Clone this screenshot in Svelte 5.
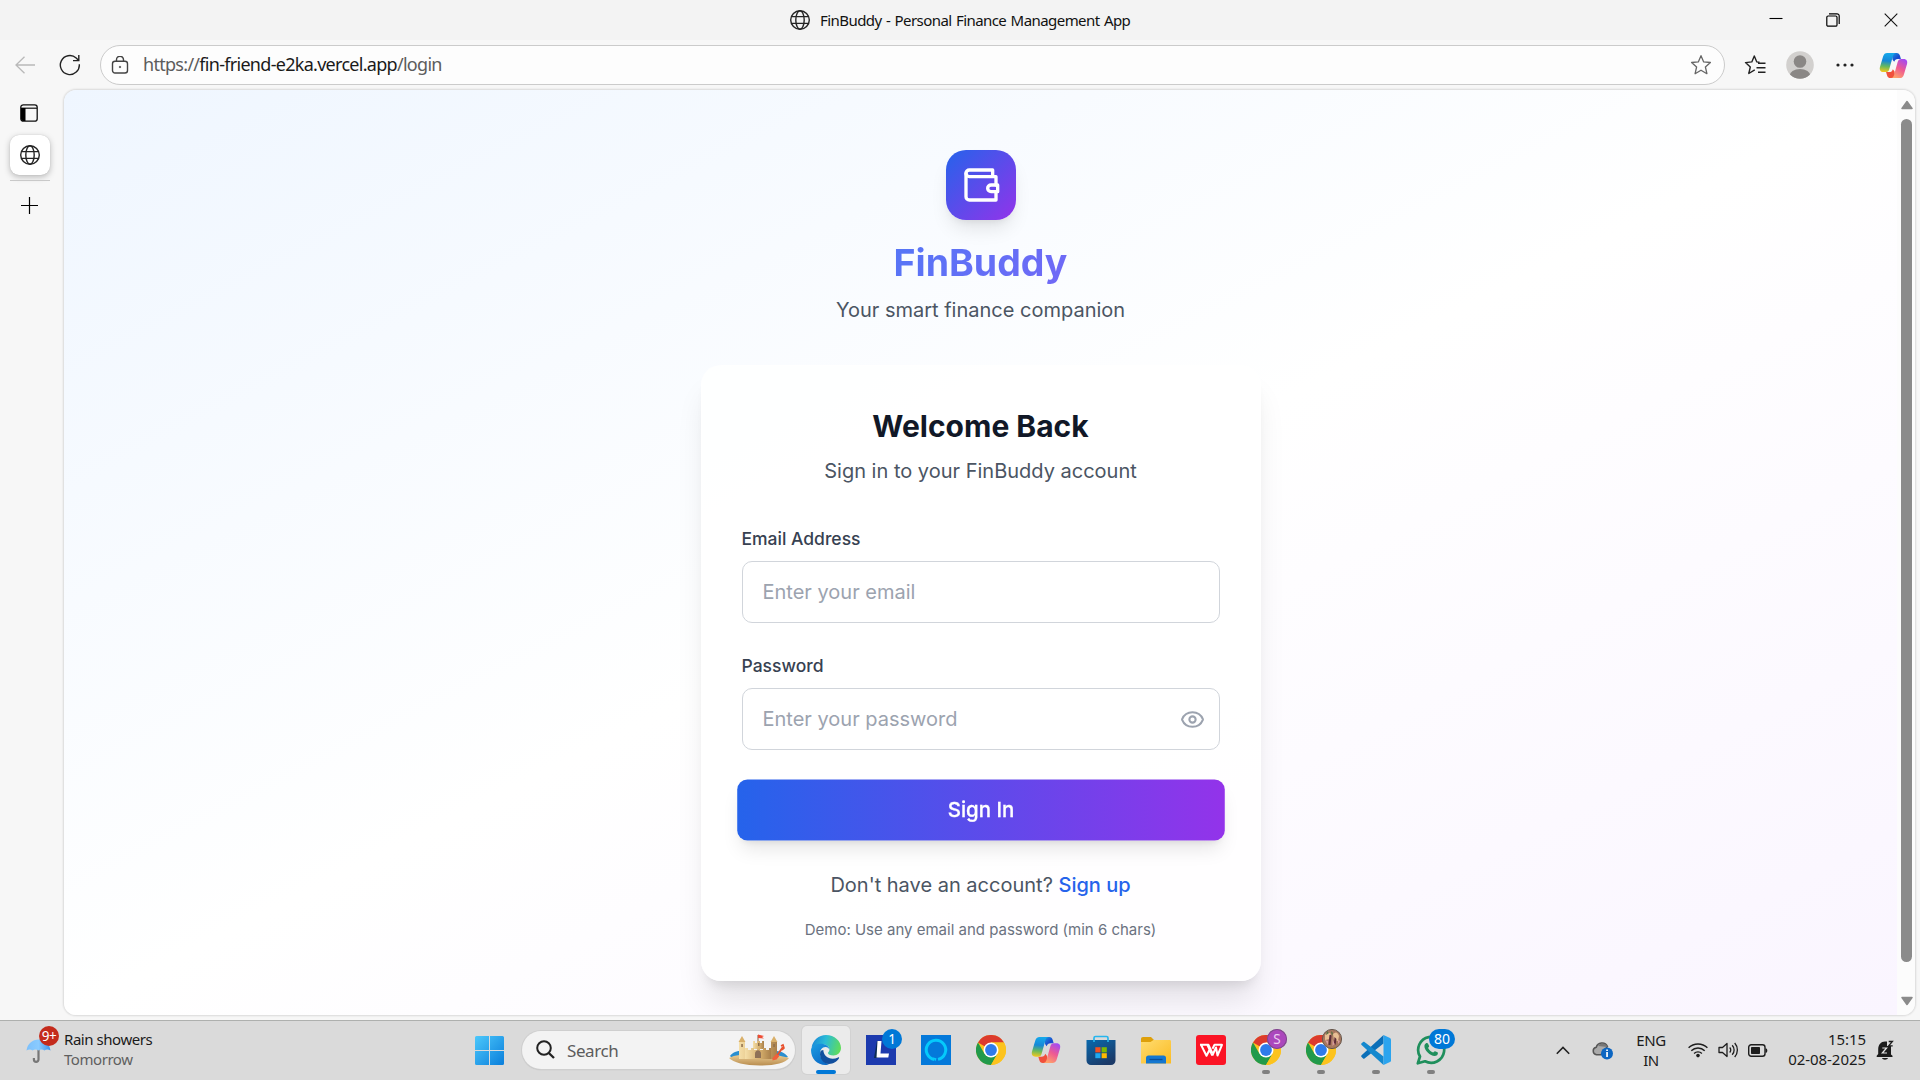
<script>
  let email = $state('');
  let password = $state('');
</script>

{#snippet globe()}
  <svg width="22" height="22" viewBox="0 0 22 22" fill="none" stroke="#242424" stroke-width="1.4">
    <circle cx="11" cy="11" r="9.3" />
    <ellipse cx="11" cy="11" rx="4.2" ry="9.3" />
    <path d="M2.3 7.6h17.4M2.3 14.4h17.4" />
  </svg>
{/snippet}

{#snippet copilot(id, size)}
  <svg width={size} height={size} viewBox="0 0 30 30">
    <defs>
      <linearGradient id="{id}a" x1="0.3" y1="0" x2="0.2" y2="1">
        <stop offset="0" stop-color="#16a8ea" /><stop offset=".4" stop-color="#1588d8" />
        <stop offset=".7" stop-color="#68b95c" /><stop offset="1" stop-color="#f8c81c" />
      </linearGradient>
      <linearGradient id="{id}b" x1="0.8" y1="0" x2="0.3" y2="1">
        <stop offset="0" stop-color="#a24af5" /><stop offset=".5" stop-color="#ee5a92" />
        <stop offset="1" stop-color="#ffa36a" />
      </linearGradient>
      <linearGradient id="{id}c" x1="0" y1="0" x2="1" y2="1">
        <stop offset="0" stop-color="#1b9ee8" /><stop offset=".6" stop-color="#1848cc" />
        <stop offset="1" stop-color="#2462e0" />
      </linearGradient>
    </defs>
    <path d="M13 2h5.2c2 0 3 1.2 3.5 3l1 3.2h-3.2c-2.2 0-3.2 1-3.8 3L14 9z" fill="url(#{id}c)" />
    <path d="M17 28h-5.200c-2 0-3-1.200-3.500-3l-1-3.200h3.200c2.200 0 3.200-1 3.800-3L16 21z" fill="#f0503c" />
    <path d="M8.500 2h9c-1.700.3-2.500 1.500-3 3l-3.800 13.500c-.6 2.200-1.700 3.200-3.700 3.200H4.500C1.500 21.700.2 19.500 1 16.500L4.300 5.500C5 3.200 6.300 2 8.500 2z" fill="url(#{id}a)" />
    <path d="M21.500 28h-9c1.700-.3 2.500-1.500 3-3l3.800-13.500c.6-2.200 1.700-3.200 3.700-3.200h2.500c3 0 4.300 2.200 3.500 5.200l-3.300 11c-.7 2.300-2 3.500-4.200 3.500z" fill="url(#{id}b)" />
  </svg>
{/snippet}

{#snippet chrome()}
  <svg width="30" height="30" viewBox="0 0 30 30">
    <circle cx="15" cy="15" r="15" fill="#fcc31e" />
    <path d="M15 15 2 7.500A15 15 0 0 1 28 7.500H15z" fill="#dc3b2d" />
    <path d="M2 7.500A15 15 0 0 0 15 30l6.500-11.200L15 15 8.500 18.800z" fill="#219a4b" />
    <path d="M15 30 21.500 18.800 22.500 15 28 7.500A15 15 0 0 1 15 30z" fill="#fcc31e" />
    <path d="M15 7.500h13L15 15z" fill="#fcc31e" />
    <circle cx="15" cy="15" r="7.500" fill="#fff" />
    <circle cx="15" cy="15" r="5.900" fill="#2f7bea" />
  </svg>
{/snippet}

<div class="desktop">
  <header class="titlebar">
    <div class="page-title">{@render globe()}<span>FinBuddy - Personal Finance Management App</span></div>
    <div class="window-controls">
      <svg width="14" height="14" viewBox="0 0 14 14"><path d="M.5 5.500h13" stroke="#000" stroke-width="1.100" /></svg>
      <svg width="14" height="14" viewBox="0 0 14 14" fill="none" stroke="#000" stroke-width="1.200"><rect x=".8" y="3" width="10.200" height="10.200" rx="1.300" /><path d="M3 .8h8a2.200 2.200 0 0 1 2.200 2.200v8" /></svg>
      <svg width="14" height="14" viewBox="0 0 14 14"><path d="m.7.7 12.600 12.600m0-12.600L.7 13.300" stroke="#111" stroke-width="1.100" /></svg>
    </div>
  </header>

  <nav class="toolbar">
    <div class="cell">
      <svg width="20" height="18" viewBox="0 0 20 18" fill="none" stroke="#b9b9b9" stroke-width="1.300"><path d="M20 9H1M9.500.7 1 9l8.500 8.300" /></svg>
    </div>
    <div class="cell">
      <svg width="22" height="22" viewBox="0 0 22 22" fill="none" stroke="#222" stroke-width="1.400"><path d="M20.300 10.200A9.500 9.500 0 1 1 17.200 4l2.500 2.500M19.800 1v5.600h-5.800" /></svg>
    </div>
    <div class="address">
      <svg width="18" height="18" viewBox="0 0 18 18" fill="none" stroke="#444" stroke-width="1.400"><rect x="1.500" y="5.200" width="15" height="11.800" rx="2.500" /><path d="M5.500 5V3.700a3.500 3.500 0 0 1 7 0V5" /><circle cx="9" cy="11" r=".8" fill="#333" stroke-width=".6" /></svg>
      <span class="url">https://<b>fin-friend-e2ka.vercel.app</b>/login</span>
      <svg width="22" height="22" viewBox="0 0 22 22" fill="none" stroke="#666" stroke-width="1.300" stroke-linejoin="round"><path d="m11 1.700 2.700 6.200 6.700.6-5 4.500 1.500 6.700L11 16.200l-5.900 3.500L6.600 13l-5-4.500 6.700-.6z" /></svg>
    </div>
    <div class="cell">
      <svg width="22" height="22" viewBox="0 0 22 22" fill="none" stroke="#222" stroke-width="1.400" stroke-linejoin="round"><path d="m15.500 8.200-2.700-.3L10.300 2 7.800 7.900l-6.300.7 4.800 4.400-1.500 6.500 5.500-3.300.5-.3M14 9.300h7.500M12.500 13.800h9M14 18.300h7.500" /></svg>
    </div>
    <div class="cell">
      <svg width="28" height="28" viewBox="0 0 28 28"><defs><clipPath id="av"><circle cx="14" cy="14" r="13.800" /></clipPath></defs><g clip-path="url(#av)"><rect width="28" height="28" fill="#d2d0ce" /><circle cx="14" cy="10.500" r="6.300" fill="#8a8785" /><ellipse cx="14" cy="25" rx="10.500" ry="7" fill="#8a8785" /></g></svg>
    </div>
    <div class="cell">
      <svg width="18" height="4" viewBox="0 0 18 4" fill="#222"><circle cx="2" cy="2" r="1.600" /><circle cx="9" cy="2" r="1.600" /><circle cx="16" cy="2" r="1.600" /></svg>
    </div>
    <div class="cell">{@render copilot('top', 29)}</div>
  </nav>

  <div class="workspace">
    <aside class="side-tabs">
      <svg class="panel-icon" width="18" height="18" viewBox="0 0 18 18"><rect x=".8" y=".8" width="16.400" height="16.400" rx="2.500" fill="none" stroke="#111" stroke-width="1.300" /><path d="M1 4.200h16" stroke="#111" stroke-width="1.200" /><path d="M1 4h4.500v13H3a2 2 0 0 1-2-2z" fill="#000" /></svg>
      <div class="tab">{@render globe()}</div>
      <div class="tab-rule"></div>
      <svg class="plus" width="18" height="18" viewBox="0 0 18 18"><path d="M8.500 0v17M0 8.500h17" stroke="#000" stroke-width="1.200" /></svg>
    </aside>

    <div class="viewport">
      <main class="page">
        <div class="logo">
          <svg width="40" height="40" viewBox="0 0 24 24" fill="none" stroke="#fff" stroke-width="2" stroke-linecap="round" stroke-linejoin="round"><path d="M21 12V7H5a2 2 0 0 1 0-4h14v4" /><path d="M3 5v14a2 2 0 0 0 2 2h16v-5" /><path d="M18 12a2 2 0 0 0 0 4h4v-4Z" /></svg>
        </div>
        <h1>FinBuddy</h1>
        <p class="tagline">Your smart finance companion</p>

        <section class="card">
          <h2>Welcome Back</h2>
          <p class="lead">Sign in to your FinBuddy account</p>
          <form onsubmit={(e) => e.preventDefault()}>
            <label for="email">Email Address</label>
            <div class="field"><input id="email" type="email" placeholder="Enter your email" bind:value={email} /></div>
            <label for="password">Password</label>
            <div class="field">
              <input id="password" type="password" placeholder="Enter your password" bind:value={password} />
              <svg width="25" height="25" viewBox="0 0 24 24" fill="none" stroke="#9ca3af" stroke-width="2" stroke-linecap="round" stroke-linejoin="round"><path d="M2.062 12.348a1 1 0 0 1 0-.696 10.750 10.750 0 0 1 19.876 0 1 1 0 0 1 0 .696 10.750 10.750 0 0 1-19.876 0" /><circle cx="12" cy="12" r="3" /></svg>
            </div>
            <button type="submit">Sign In</button>
          </form>
          <p class="signup">Don't have an account? <a href="#signup">Sign up</a></p>
          <p class="demo">Demo: Use any email and password (min 6 chars)</p>
        </section>
      </main>
      <div class="scrollbar">
        <svg width="12" height="10" viewBox="0 0 12 10"><path d="M6 1.500 11 8.500H1z" fill="#8b8b8b" stroke="#8b8b8b" stroke-width="1.500" stroke-linejoin="round" /></svg>
        <div class="thumb"></div>
        <svg width="12" height="10" viewBox="0 0 12 10"><path d="M6 8.500 11 1.500H1z" fill="#8b8b8b" stroke="#8b8b8b" stroke-width="1.500" stroke-linejoin="round" /></svg>
      </div>
    </div>
  </div>

  <footer class="taskbar">
    <div class="weather">
      <div class="umbrella">
        <svg width="26" height="26" viewBox="0 0 26 26"><defs><linearGradient id="um" x1="0" y1="0" x2="1" y2="0"><stop offset="0" stop-color="#7cc0fb" /><stop offset=".5" stop-color="#8acbff" /><stop offset="1" stop-color="#3c93ee" /></linearGradient></defs><path d="M12.500 11v10.500a2.300 2.300 0 0 1-4.600 0V20" fill="none" stroke="#777" stroke-width="2.200" /><path d="M.5 12.500C1.500 5.500 6.500 1.500 12.500 1.500s11 4 12 11c-2-1.500-4.500-1.500-6 0-2-1.500-4-1.500-6 0-2-1.500-4-1.500-6 0-1.500-1.500-4-1.500-6 0z" fill="url(#um)" /></svg>
        <span class="count red">9+</span>
      </div>
      <div class="forecast"><span>Rain showers</span><span class="muted">Tomorrow</span></div>
    </div>

    <div class="start">
      <svg width="29" height="29" viewBox="0 0 29 29"><defs><linearGradient id="win" x1="0" y1="0" x2="1" y2="1"><stop offset="0" stop-color="#4cc8fb" /><stop offset="1" stop-color="#0a7edb" /></linearGradient></defs><path d="M1.500 0H14v14H0V1.500A1.500 1.500 0 0 1 1.500 0zM15 0h12.500A1.500 1.500 0 0 1 29 1.500V14H15zM0 15h14v14H1.500A1.500 1.500 0 0 1 0 27.500zM15 15h14v12.500a1.500 1.500 0 0 1-1.500 1.500H15z" fill="url(#win)" /></svg>
    </div>

    <div class="search">
      <svg width="20" height="20" viewBox="0 0 20 20" fill="none" stroke="#222" stroke-width="2"><circle cx="8" cy="8" r="6.800" /><path d="m12.800 13 5.200 5" stroke-width="2.400" /></svg>
      <span>Search</span>
      <svg width="60" height="32" viewBox="0 0 60 32">
        <defs>
          <linearGradient id="wall" x1="0" y1="0" x2="1" y2="0"><stop offset="0" stop-color="#f5dfa9" /><stop offset=".6" stop-color="#d4ad6b" /><stop offset="1" stop-color="#a9804b" /></linearGradient>
          <linearGradient id="sand" x1="0" y1="0" x2="0" y2="1"><stop offset="0" stop-color="#efd298" /><stop offset="1" stop-color="#b98d50" /></linearGradient>
        </defs>
        <path d="M1 22c3-5 10-6 16-5v7H3zM45 17c7 0 10 1 14 6l-8 3z" fill="#2a8fd0" />
        <path d="M0 24c6-3 13-4 30-4s26 3 30 4c-4 5-14 7.500-29 7.500S4 28.500 0 24z" fill="url(#sand)" />
        <path d="M10 8h6v17h-6zM42 8h6v17h-6z" fill="url(#wall)" />
        <path d="M9.500 8 13 2l3.500 6zM41.500 8 45 2l3.500 6z" fill="#d9b06a" />
        <path d="M24 7h2v2h2V7h3v2h2V7h2v8H24z" fill="url(#wall)" />
        <path d="M16 14h3v2h3v-2h3v2h3v-2h3v2h3v-2h3v2h3v-2h2v11H16z" fill="url(#wall)" />
        <path d="M26 24v-4c0-5 6-5 6 0v4z" fill="#8e7157" />
        <path d="M12.300 10h1.500v3h-1.500zM44.300 10h1.500v3h-1.500zM29 9h1.500v3H29z" fill="#8e6e4b" />
        <path d="M29 7V1" stroke="#8a5a3a" /><path d="m29 .5 6 1.500-2 1 2 1.500-6-.5z" fill="#ef4c33" />
        <path d="m54 13-7 10" stroke="#e8502d" stroke-width="2" /><path d="m52 12 2-1 1 3-2 2" fill="none" stroke="#e8502d" stroke-width="1.600" /><path d="m43.500 24 4-4 3 2-3 3.500-4 1z" fill="#f0603a" />
      </svg>
    </div>

    <div class="apps">
      <div class="app active">
        <svg width="30" height="30" viewBox="0 0 30 30">
          <defs>
            <linearGradient id="eg" x1="0" y1=".3" x2="1" y2=".5"><stop offset="0" stop-color="#1a86d8" /><stop offset=".45" stop-color="#2bbcd6" /><stop offset="1" stop-color="#5fdc5c" /></linearGradient>
            <linearGradient id="eb" x1="0" y1="0" x2=".6" y2="1"><stop offset="0" stop-color="#1b9de2" /><stop offset="1" stop-color="#0c6cc8" /></linearGradient>
          </defs>
          <path d="M.6 12.500C1.800 5 7.800 0 15 0c8.500 0 15 6 15 13 0 4.500-3.500 7.500-7.500 7.500-3.500 0-5.500-1.200-5.500-2.500 0-1 1.500-1.500 1.500-3.500 0-3-3-5-6.500-5C7 9.500 3 10.500.6 12.500z" fill="url(#eg)" />
          <path d="M0 15C.5 11 4.500 8.800 9 8.800c6 0 9.500 2.700 9.500 5.900-.5-1.500-2-2.700-4-2.700-3.500 0-5.500 3-5.500 6.500 0 5 4 9.500 9 10.500-1.200.7-2 1-3.500 1C6 30 0 23.500 0 15z" fill="url(#eb)" />
          <path d="M9.200 17c-1.200 6.500 3.300 12 8.800 12 4.500 0 8-2.500 10-5.700.4-.7-.2-1.200-.9-.9C19.500 26 12.500 21.500 12.300 15c-1.500.2-2.700.8-3.100 2z" fill="#114f9e" />
        </svg>
        <i class="run current"></i>
      </div>
      <div class="app">
        <svg width="30" height="30" viewBox="0 0 30 30"><path d="M0 0h30v30H0z" fill="#1c3aae" /><path d="m11 6-3 17 4 0 1-3V6z" fill="#0a2b53" /><path d="M11.500 6h4l-1 12.500H23l-.7 4H10.500z" fill="#fff" /></svg>
        <span class="count blue">1</span>
      </div>
      <div class="app">
        <svg width="30" height="30" viewBox="0 0 30 30"><path d="M0 0h30v30H0z" fill="#0479da" /><path d="M17 24.400A9.700 9.700 0 1 0 13.500 24.500" fill="none" stroke="#05c9fb" stroke-width="3" /><path d="m12 22.500 3.500.8-.8 3z" fill="#05c9fb" /></svg>
      </div>
      <div class="app">{@render chrome()}</div>
      <div class="app">{@render copilot('bar', 30)}</div>
      <div class="app">
        <svg width="30" height="30" viewBox="0 0 30 30"><defs><linearGradient id="st" x1="0" y1="0" x2=".6" y2="1"><stop offset="0" stop-color="#0969ad" /><stop offset="1" stop-color="#1b3a68" /></linearGradient></defs><path d="M8 7V3a1.500 1.500 0 0 1 1.500-1.500h11A1.500 1.500 0 0 1 22 3v4" fill="none" stroke="#27b6ee" stroke-width="1.700" /><path d="M.5 5h29v20.500a4.500 4.500 0 0 1-4.500 4.500H5a4.500 4.500 0 0 1-4.500-4.500z" fill="url(#st)" /><path d="M7.200 5h1.600v2H7.200zM21.200 5h1.600v2h-1.600z" fill="#27b6ee" /><path d="M9.300 12.200h5.200v5.200H9.300z" fill="#f25022" /><path d="M15.600 12.200h5.200v5.200h-5.200z" fill="#7fba00" /><path d="M9.300 18.200h5.200v5H9.300z" fill="#1fa9f0" /><path d="M15.600 18.200h5.200v5h-5.200z" fill="#ffb900" /></svg>
      </div>
      <div class="app">
        <svg width="30" height="30" viewBox="0 0 30 30"><defs><linearGradient id="fo" x1="0" y1="0" x2="1" y2="1"><stop offset="0" stop-color="#ffdc70" /><stop offset="1" stop-color="#fbbb22" /></linearGradient></defs><path d="M0 4.200C0 2.800.8 2 2 2h8l3.500 3.500H29V12H0z" fill="#dea00b" /><path d="M0 7h9.500l3-2H28.500C29.500 5 30 5.500 30 6.500V28.500H0z" fill="url(#fo)" /><path d="M5 28.500V23a2.500 2.500 0 0 1 2.500-2.500h15A2.500 2.500 0 0 1 25 23v5.500z" fill="#1477d0" /><path d="M8.500 24.500h13" stroke="#0a4e98" stroke-width="1.300" /></svg>
      </div>
      <div class="app">
        <svg width="30" height="30" viewBox="0 0 30 30"><rect width="30" height="30" rx="3" fill="#fb1425" /><path d="M4 9.800h8.500l3.800 8.200M5 9.800l5.500 11 2.800-5.500M16.300 20.500l-5-10.700M16.300 20.500l3.700-8 1.500 8L26 9.800h-7.500l-2 4" fill="none" stroke="#fff" stroke-width="2" stroke-linejoin="round" /></svg>
      </div>
      <div class="app">{@render chrome()}<span class="count purple">S</span><i class="run"></i></div>
      <div class="app">
        {@render chrome()}
        <span class="count"><svg width="20" height="20" viewBox="0 0 20 20"><circle cx="10" cy="10" r="9.600" fill="#a8785f" stroke="#66574c" /><path d="M3 6q3-4 6-1l-1 5-5 1zM11 5q4-4 6 2l-1 5-4-1z" fill="#e8bf94" /><path d="M7.500 6q1.500-1 2 1L8.500 16H6.500l.5-6zM12.500 8l2 2-1 6-1.500-2z" fill="#5d2c3a" /><path d="M3 11l3 1v4zM10.500 10l2 5-2 2zM16 11l2 1-2 3z" fill="#d99c9c" /><path d="M9 2l2 2-1 3zM5 2l2 2-3 2z" fill="#557043" /></svg></span>
        <i class="run"></i>
      </div>
      <div class="app">
        <svg width="30" height="30" viewBox="0 0 30 30"><path d="M22.500 0v8.500L3.500 23.500c-.5.4-1 .3-1.400 0L.6 22c-.6-.5-.6-1.200 0-1.700z" fill="#0b6fb8" /><path d="M22.500 30v-8.500L3.500 7c-.5-.4-1-.3-1.400 0L.6 8.300c-.6.5-.6 1.200 0 1.700z" fill="#1488ce" /><path d="M22.500 0 29 3c.6.3 1 .9 1 1.600v20.800c0 .7-.4 1.300-1 1.600l-6.500 3z" fill="#2ba4ee" /></svg>
        <i class="run"></i>
      </div>
      <div class="app">
        <svg width="30" height="30" viewBox="0 0 30 30"><path d="M1.800 28.300 4 21.500A13 13 0 1 1 9 26.300z" fill="none" stroke="#1f8f5c" stroke-width="2.700" stroke-linejoin="round" /><path d="M9.700 8.500c1-.8 2-.6 2.400.3l1 2.300c.2.700-.8 1.400-1 2 1.200 2.300 2.700 3.600 5 4.500.7-.4 1.300-1.700 2-1.400l2.400 1.100c.8.400.4 2.200-.5 3-4 3-13-4-12.600-9.500.1-.9.500-1.700 1.300-2.300z" fill="#1f8f5c" /></svg>
        <span class="count blue wide">80</span><i class="run"></i>
      </div>
    </div>

    <div class="tray">
      <svg width="14" height="9" viewBox="0 0 14 9" fill="none" stroke="#222" stroke-width="1.600"><path d="m.8 7.800 6.200-6.300 6.200 6.300" /></svg>
      <svg class="cloud" width="21" height="19" viewBox="0 0 21 19"><path d="M4.500 13.700a3.800 3.800 0 0 1-.2-7.500C5.500 1.500 13 0 15.500 5.500L9 13.700z" fill="#aaa" stroke="#555" stroke-width="1.500" /><path d="M6 5c3-4 8-3 9.500 1z" fill="#777" /><circle cx="15" cy="12.500" r="6" fill="#0c66c2" /><path d="M14.200 11h1.700v5h-1.700zM14.200 8.500h1.700v1.600h-1.700z" fill="#fff" /></svg>
      <div class="lang"><span>ENG</span><span>IN</span></div>
      <svg width="20" height="16" viewBox="0 0 20 16" fill="none" stroke="#1d1d1d" stroke-width="1.400"><path d="M.6 5.800a13.400 13.400 0 0 1 18.800 0M3.300 8.700a9.500 9.500 0 0 1 13.400 0M6.100 11.500a5.500 5.500 0 0 1 7.800 0" /><circle cx="10" cy="13.600" r="1.800" fill="#1d1d1d" stroke="none" /></svg>
      <svg width="21" height="16" viewBox="0 0 21 16" fill="none" stroke="#1d1d1d" stroke-width="1.300"><path d="M1 5.500h3.500L9 1.500v13l-4.500-4H1z" stroke-linejoin="round" /><path d="M11.700 5.500a3.500 3.500 0 0 1 0 5M14.200 3.200a7 7 0 0 1 0 9.600M16.700 1a10.500 10.500 0 0 1 0 14" /></svg>
      <svg width="20" height="13" viewBox="0 0 20 13"><rect x=".7" y=".7" width="16.300" height="11.600" rx="2.500" fill="none" stroke="#1d1d1d" stroke-width="1.400" /><rect x="3" y="3" width="9" height="7" rx=".7" fill="#1d1d1d" /><path d="M17.500 4.200c2.400 0 2.400 4.600 0 4.600z" fill="#1d1d1d" /></svg>
      <div class="clock"><span>15:15</span><span>02-08-2025</span></div>
      <svg class="bell" width="18" height="20" viewBox="0 0 18 20"><path d="M2.200 9.500C2.200 4.500 5 1.500 9 1.500h2V6h4v8.500l1.500 1.200V17H.7v-1.300l1.500-1.700zM6 18h6c-.6 2.200-5.400 2.200-6 0z" fill="#1b1b1b" /><path d="M6.300 8h4.300L6.300 13H11" fill="none" stroke="#e3e3e3" stroke-width="1.200" /><path d="M12.700 1.500h3.700l-3.700 4.300h4" fill="none" stroke="#1b1b1b" stroke-width="1.300" /></svg>
    </div>
  </footer>
</div>

<style>
  :global(body) { margin: 0; background: #f7f7f7; overflow: hidden; }
  * { box-sizing: border-box; }
  svg { display: block; flex: none; }
  h1, h2, p { margin: 0; }
  .desktop { width: 1920px; height: 1080px; display: flex; flex-direction: column; background: #f7f7f7; font-family: "Noto Sans", "Open Sans", sans-serif; color: #1b1b1b; }

  .titlebar { height: 40px; flex: none; display: grid; grid-template-columns: 789px 958px 173px; background: #f3f3f3; }
  .page-title { grid-column: 2; display: flex; align-items: center; gap: 9px; font-size: 15px; letter-spacing: -0.56px; word-spacing: 1px; color: #111; white-space: nowrap; }
  .window-controls { display: grid; grid-template-columns: repeat(3, 57.600px); place-items: center; }

  .toolbar { height: 50px; flex: none; display: grid; grid-template-columns: 50px 50px 1625px 60px 30px 59px 38px; align-items: center; }
  .cell { display: grid; place-items: center; height: 50px; }
  .cell:nth-child(2) { padding-right: 10px; }
  .address { height: 40px; display: flex; align-items: center; border: 1px solid #cbcbcb; border-radius: 20px; background: #fdfdfd; padding: 0 12px 0 10px; }
  .url { flex: 1; margin-left: 14px; padding-bottom: 2px; font-size: 18px; letter-spacing: -0.71px; color: #5c5c5c; white-space: nowrap; }
  .url b { font-weight: 400; color: #1a1a1a; }

  .workspace { height: 930px; flex: none; display: grid; grid-template-columns: 64px 1851px; }
  .side-tabs { padding: 14px 14px 0 10px; display: flex; flex-direction: column; }
  .panel-icon { margin-left: 10px; }
  .tab { margin-top: 13px; width: 40px; height: 40px; border-radius: 9px; background: #fff; display: grid; place-items: center; box-shadow: 0 2px 6px rgba(0, 0, 0, .25), 0 0 1px rgba(0, 0, 0, .2); }
  .tab-rule { margin-top: 5px; height: 1px; background: #c9c9c9; }
  .plus { margin: 16px 0 0 11px; }

  .viewport { height: 925px; display: grid; grid-template-columns: 1833px 18px; border-radius: 12px; overflow: hidden; box-shadow: 0 0 2px 1px rgba(0, 0, 0, .12); }
  .page { display: flex; flex-direction: column; align-items: center; padding-top: 60px; background: linear-gradient(to bottom right, #eff6ff, #fff 50%, #faf5ff); font-family: Inter, sans-serif; font-size: 20px; line-height: 30px; color: #4b5563; }
  .logo { width: 70px; height: 70px; flex: none; border-radius: 20px; display: grid; place-items: center; background: linear-gradient(to bottom right, #2563eb, #9333ea); box-shadow: 0 12px 19px -4px rgba(0, 0, 0, .1), 0 5px 8px -5px rgba(0, 0, 0, .1); }
  h1 { width: 560px; margin-top: 20px; text-align: center; font-size: 37.500px; line-height: 45px; font-weight: 700; background: linear-gradient(135deg, #3b82f6, #8b5cf6); -webkit-background-clip: text; background-clip: text; color: transparent; }
  .tagline { margin-top: 10px; }
  .card { width: 560px; margin-top: 40px; padding: 40px; border: 1px solid rgba(255, 255, 255, .2); border-radius: 20px; background: rgba(255, 255, 255, .8); box-shadow: 0 25px 31px -6px rgba(0, 0, 0, .1), 0 10px 12px -7px rgba(0, 0, 0, .1); text-align: center; }
  h2 { font-size: 30px; line-height: 40px; font-weight: 700; color: #111827; }
  .lead { margin: 10px 0 40px; }
  form { display: flex; flex-direction: column; text-align: left; }
  label { font-size: 17.500px; line-height: 25px; font-weight: 500; color: #374151; margin-bottom: 10px; }
  .field { height: 62px; display: flex; align-items: center; padding: 0 14px 0 20px; margin-bottom: 30px; border: 1px solid #d1d5db; border-radius: 10px; background: #fff; }
  input { flex: 1; min-width: 0; height: 30px; padding: 0; border: 0; outline: 0; background: none; font: 400 20px/30px Inter, sans-serif; color: #111827; }
  input::placeholder { color: #9ca3af; opacity: 1; }
  button { height: 60px; border: 0; border-radius: 10px; transform: scale(1.02); color: #fff; font: 500 20px/30px Inter, sans-serif; background: linear-gradient(to right, #2563eb, #9333ea); box-shadow: 0 12px 19px -4px rgba(0, 0, 0, .1), 0 5px 8px -5px rgba(0, 0, 0, .1); -webkit-text-stroke: .25px #fff; }
  .signup { margin-top: 30px; }
  .signup a { color: #2563eb; font-weight: 500; text-decoration: none; }
  .demo { margin-top: 20px; font-size: 15px; line-height: 20px; color: #6b7280; }

  .scrollbar { background: #fcfcfc; display: flex; flex-direction: column; align-items: center; padding: 10px 0 8px 1px; }
  .thumb { width: 11px; height: 843px; margin: 9px 0 34px; border-radius: 6px; background: #8b8b8b; flex: none; }

  .taskbar { height: 60px; flex: none; display: grid; grid-template-columns: 475px 47px 280px 738px 380px; align-items: center; background: #dadada; border-top: 1px solid #aeb0ae; font-size: 15px; padding-bottom: 1px; }
  .weather { display: flex; align-items: center; padding-left: 26px; }
  .umbrella { position: relative; width: 38px; padding-top: 2px; }
  .forecast, .lang, .clock { display: flex; flex-direction: column; line-height: 20px; letter-spacing: -0.45px; white-space: nowrap; }
  .forecast { padding-bottom: 3px; }
  .muted { color: #5f5f5f; }
  .count { position: absolute; display: grid; place-items: center; width: 20px; height: 20px; border-radius: 10px; font-size: 13.500px; line-height: 20px; color: #fff; }
  .red { left: 13px; top: -10px; background: #c42b1c; letter-spacing: -0.4px; }
  .search { width: 273px; height: 38px; display: flex; align-items: center; padding: 0 6px 0 14px; border-radius: 19px; background: #f3f3f3; box-shadow: 0 0 0 1px #cfcfcf, 0 1px 1px #aaa; }
  .search span { flex: 1; margin-left: 11px; font-size: 17px; letter-spacing: -0.4px; color: #5c5c5c; }
  .apps { display: flex; gap: 7px; }
  .app { position: relative; width: 48px; height: 48px; display: grid; place-items: center; border-radius: 5px; }
  .active { background: #ebebeb; box-shadow: 0 0 0 1px #d2d2d2; }
  .run { position: absolute; left: 20px; bottom: 0; width: 8px; height: 4px; border-radius: 2px; background: #808080; }
  .current { left: 14px; width: 20px; background: #0078d7; }
  .app .count { left: 25px; top: 3px; }
  .blue { background: #0078d7; }
  .purple { background: #ab47bc; color: #eed0f2; box-shadow: inset 0 0 0 1px #7d4a88; }
  .app .wide { left: 22px; width: 26px; font-size: 14px; }
  .tray { display: grid; grid-template-columns: 46px 35px 60px 34px 26px 34px 91px 39px; place-items: center; }
  .cloud { margin-right: 2px; }
  .lang { align-items: center; padding-bottom: 1px; }
  .clock { justify-self: end; align-items: flex-end; padding-bottom: 3px; letter-spacing: -0.05px; }
  .bell { margin-right: 1px; }
</style>
